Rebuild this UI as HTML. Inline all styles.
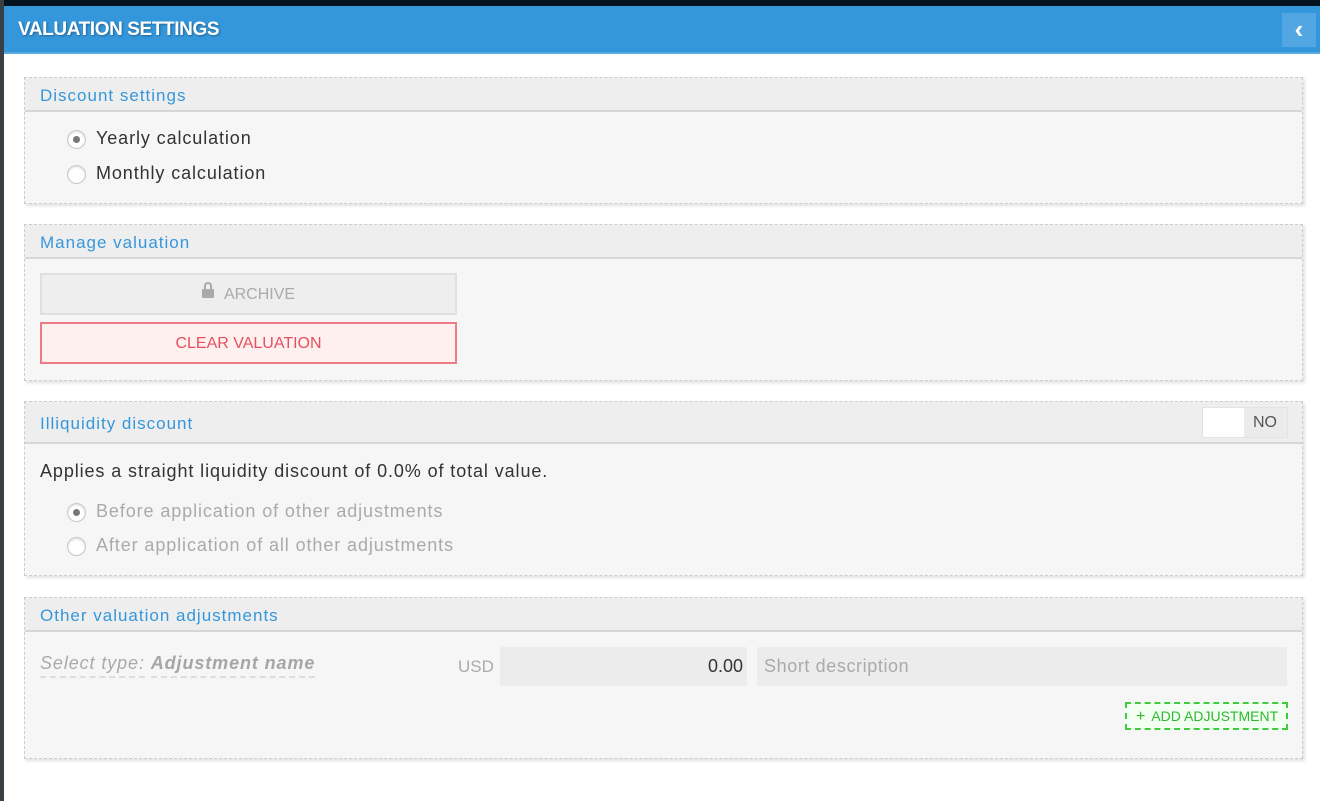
<!DOCTYPE html>
<html><head><meta charset="utf-8">
<style>
*{box-sizing:border-box;margin:0;padding:0}
body{width:1320px;height:801px;background:#fff;font-family:"Liberation Sans",sans-serif;position:relative;overflow:hidden;color:#333}
.topbar{position:absolute;left:0;top:0;width:1320px;height:6px;background:#04131f}
.leftbar{position:absolute;left:0;top:0;width:4px;height:801px;background:#3a3f44}
.hdr{position:absolute;left:4px;top:6px;width:1316px;height:48px;background:#3597db;border-bottom:2px solid #5aa9e0}
.hdr h1{position:absolute;left:14px;top:13px;color:#fff;font-size:19px;font-weight:bold;text-shadow:1px 1px 2px rgba(0,0,0,.35);letter-spacing:-0.4px}
.back{position:absolute;right:4px;top:7px;width:34px;height:34px;background:#52a7e2;color:#fff;font-size:26px;line-height:32px;text-align:center;font-weight:bold}
.panel{position:absolute;left:24px;width:1279px;background:#f6f6f6;border:1px dashed #ccc;box-shadow:2px 2px 3px rgba(0,0,0,.12)}
.ph{height:34px;background:#eeeeee;border-bottom:2px solid #d6d6d6;position:relative}
.ph span{position:absolute;left:15px;top:8px;color:#3597db;font-size:17px;letter-spacing:1px}
.radio{position:absolute;left:42px;font-size:18px;color:#333;letter-spacing:0.9px}
.radio i{position:absolute;left:0;top:2px;width:19px;height:19px;border-radius:50%;background:#fff;border:1px solid #c8c8c8;box-shadow:inset 0 1px 2px rgba(0,0,0,.15)}
.radio i.on:after{content:"";position:absolute;left:5px;top:5px;width:7px;height:7px;border-radius:50%;background:#777}
.radio b{font-weight:normal;position:absolute;left:29px;top:0;white-space:nowrap}
.dis{color:#aaa}
.btn{position:absolute;left:15px;width:417px;height:42px;text-align:center;line-height:40px;font-size:16px}
</style></head><body>
<div class="topbar"></div><div class="leftbar"></div>
<div class="hdr"><h1>VALUATION SETTINGS</h1><div class="back">&#8249;</div></div>

<div class="panel" style="top:77px;height:127px">
 <div class="ph"><span>Discount settings</span></div>
 <div class="radio" style="top:50px"><i class="on"></i><b>Yearly calculation</b></div>
 <div class="radio" style="top:85px"><i></i><b>Monthly calculation</b></div>
</div>

<div class="panel" style="top:224px;height:157px">
 <div class="ph"><span>Manage valuation</span></div>
 <div class="btn" style="top:48px;background:#eeeeee;border:2px solid #e0e0e0;color:#aaa"><span style="display:inline-block;width:12px;height:9px;background:#aaa;border-radius:1px;position:relative;margin-right:10px;top:-1px"><span style="position:absolute;left:2px;top:-7px;width:8px;height:9px;border:2px solid #aaa;border-bottom:none;border-radius:4px 4px 0 0"></span></span>ARCHIVE</div>
 <div class="btn" style="top:97px;background:#fff0f0;border:2px solid #ee7a85;color:#e5505e">CLEAR VALUATION</div>
</div>

<div class="panel" style="top:401px;height:175px">
 <div class="ph" style="height:42px"><span style="top:12px">Illiquidity discount</span>
  <div style="position:absolute;right:14px;top:5px;width:86px;height:31px;background:#ebebeb;border:1px solid #e3e3e3">
   <div style="position:absolute;left:0;top:0;width:41px;height:29px;background:#fff"></div>
   <span style="position:absolute;left:50px;top:6px;color:#555;font-size:16px;letter-spacing:0">NO</span></div>
 </div>
 <div style="position:absolute;left:15px;top:59px;font-size:18px;color:#333;letter-spacing:0.9px">Applies a straight liquidity discount of 0.0% of total value.</div>
 <div class="radio dis" style="top:99px"><i class="on"></i><b>Before application of other adjustments</b></div>
 <div class="radio dis" style="top:133px"><i></i><b>After application of all other adjustments</b></div>
</div>

<div class="panel" style="top:597px;height:162px">
 <div class="ph"><span>Other valuation adjustments</span></div>
 <div style="position:absolute;left:15px;top:55px;font-size:18px;color:#aaa;font-style:italic;letter-spacing:0.9px">
  <span style="border-bottom:2px dashed #ddd;padding-bottom:3px">Select type:</span> <span style="border-bottom:2px dashed #ddd;padding-bottom:3px;font-weight:bold;color:#a6a6a6">Adjustment name</span></div>
 <div style="position:absolute;left:433px;top:59px;font-size:17px;color:#aaa">USD</div>
 <div style="position:absolute;left:475px;top:49px;width:247px;height:39px;background:#ececec;border-radius:2px;text-align:right;padding-right:4px;line-height:39px;font-size:18px;color:#333">0.00</div>
 <div style="position:absolute;left:732px;top:49px;width:530px;height:39px;background:#ececec;border-radius:2px;line-height:39px;padding-left:7px;font-size:18px;color:#aaa;letter-spacing:0.6px">Short description</div>
 <div style="position:absolute;left:1100px;top:104px;width:163px;height:28px;border:2px dashed #3fcc3f;background:#f3fff3;color:#2fb82f;font-size:14px;line-height:24px;padding-left:9px"><span style="font-size:16px;margin-right:6px">+</span>ADD ADJUSTMENT</div>
</div>
</body></html>
